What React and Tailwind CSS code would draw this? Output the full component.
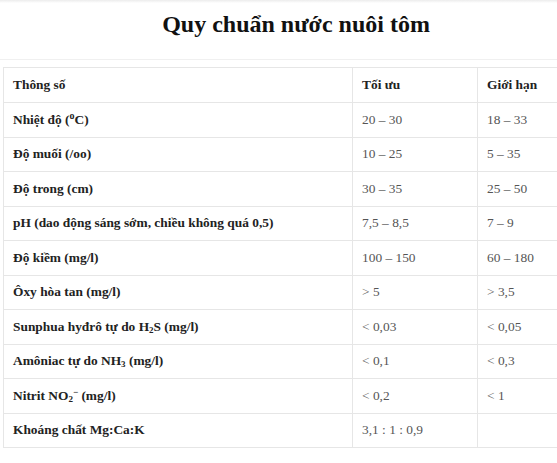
import React from "react";

const rows = [
  [<>Nhiệt độ (<sup className="text-[10px]">o</sup>C)</>, "20 – 30", "18 – 33"],
  ["Độ muối (/oo)", "10 – 25", "5 – 35"],
  ["Độ trong (cm)", "30 – 35", "25 – 50"],
  ["pH (dao động sáng sớm, chiều không quá 0,5)", "7,5 – 8,5", "7 – 9"],
  ["Độ kiềm (mg/l)", "100 – 150", "60 – 180"],
  ["Ôxy hòa tan (mg/l)", "> 5", "> 3,5"],
  [<>Sunphua hyđrô tự do H<sub className="text-[9px]">2</sub>S (mg/l)</>, "< 0,03", "< 0,05"],
  [<>Amôniac tự do NH<sub className="text-[9px]">3</sub> (mg/l)</>, "< 0,1", "< 0,3"],
  [<>Nitrit NO<sub className="text-[9px]">2</sub><sup className="text-[9px]">−</sup> (mg/l)</>, "< 0,2", "< 1"],
  ["Khoáng chất Mg:Ca:K", "3,1 : 1 : 0,9", ""],
];

export default function App() {
  return (
    <div className="w-[557px] h-[463px] overflow-hidden bg-white" style={{ fontFamily: '"Liberation Serif", "Times New Roman", serif' }}>
      <div className="w-[592px]">
        <div className="h-[3px] bg-gradient-to-b from-[#ececec] to-white" />
        <h1 className="text-[24px] leading-[30px] font-bold text-[#111] text-center pt-[6px] h-[56px]">
          Quy chuẩn nước nuôi tôm
        </h1>
        <div className="border-t border-[#f0f0f0] h-[8px]" />
        <div className="pl-[3px]">
          <table className="border-collapse text-[13.4px] w-[589px] table-fixed">
            <colgroup>
              <col className="w-[349px]" />
              <col className="w-[125px]" />
              <col />
            </colgroup>
            <thead>
              <tr className="h-[35px]">
                <th className="border border-[#e6e6e6] text-left font-bold text-[#222] px-[9px]">Thông số</th>
                <th className="border border-[#e6e6e6] text-left font-bold text-[#222] px-[9px]">Tối ưu</th>
                <th className="border border-[#e6e6e6] text-left font-bold text-[#222] px-[9px]">Giới hạn</th>
              </tr>
            </thead>
            <tbody>
              {rows.map((r, i) => (
                <tr key={i} className="h-[34.5px]">
                  <td className="border border-[#e6e6e6] font-bold text-[#222] px-[9px]">{r[0]}</td>
                  <td className="border border-[#e6e6e6] text-[#555] px-[9px]">{r[1]}</td>
                  <td className="border border-[#e6e6e6] text-[#555] px-[9px]">{r[2]}</td>
                </tr>
              ))}
            </tbody>
          </table>
        </div>
      </div>
    </div>
  );
}
